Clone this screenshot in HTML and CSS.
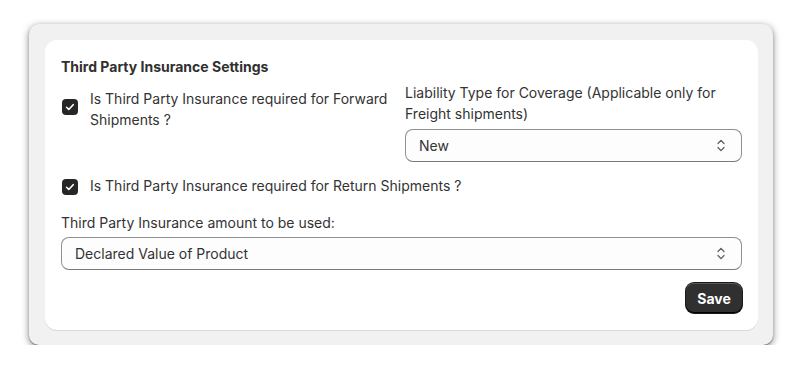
FILE: index.html
```html
<!DOCTYPE html>
<html lang="en">
<head>
<meta charset="utf-8">
<title>Third Party Insurance Settings</title>
<link rel="stylesheet" href="styles.css">
</head>
<body>
<div class="frame">
  <div class="card">
    <h2 class="title">Third Party Insurance Settings</h2>
    <div class="row">
      <label class="check check-top">
        <span class="box"><svg viewBox="0 0 16 16" width="16" height="16"><path d="M4.6 8.3l2.2 2.2 4.4-4.8" fill="none" stroke="#fff" stroke-width="1.6" stroke-linecap="round" stroke-linejoin="round"/></svg></span>
        <span class="check-text">Is Third Party Insurance required for Forward Shipments ?</span>
      </label>
      <div class="field">
        <div class="label">Liability Type for Coverage (Applicable only for Freight shipments)</div>
        <div class="select">
          <span>New</span>
          <svg class="chev" viewBox="0 0 10 15" width="10" height="15"><path d="M2 5.5l3-3.2 3 3.2M2 9.5l3 3.2 3-3.2" fill="none" stroke="#5c5c5c" stroke-width="1.2" stroke-linecap="round" stroke-linejoin="round"/></svg>
        </div>
      </div>
    </div>
    <label class="check check-return">
      <span class="box"><svg viewBox="0 0 16 16" width="16" height="16"><path d="M4.6 8.3l2.2 2.2 4.4-4.8" fill="none" stroke="#fff" stroke-width="1.6" stroke-linecap="round" stroke-linejoin="round"/></svg></span>
      <span class="check-text">Is Third Party Insurance required for Return Shipments ?</span>
    </label>
    <div class="field field-amount">
      <div class="label">Third Party Insurance amount to be used:</div>
      <div class="select">
        <span>Declared Value of Product</span>
        <svg class="chev" viewBox="0 0 10 15" width="10" height="15"><path d="M2 5.5l3-3.2 3 3.2M2 9.5l3 3.2 3-3.2" fill="none" stroke="#5c5c5c" stroke-width="1.2" stroke-linecap="round" stroke-linejoin="round"/></svg>
      </div>
    </div>
    <div class="actions">
      <button class="save">Save</button>
    </div>
  </div>
</div>
</body>
</html>
```
FILE: styles.css
```css
* { box-sizing: border-box; }
body {
  margin: 0;
  background: #fff;
  font-family: Inter, "Noto Sans", Arial, sans-serif;
  font-size: 14px;
  line-height: 21px;
  color: #333;
}
.frame {
  margin: 24px 0 0 29px;
  width: 744px;
  height: 321px;
  padding: 16px 15px 15px 16px;
  background: #f1f1f1;
  border-radius: 10px;
  box-shadow: 0 1px 1px rgba(0,0,0,0.3), 0 2px 7px rgba(0,0,0,0.5);
}
.card {
  height: 290px;
  background: #fff;
  border-radius: 12px;
  padding: 17px 16px 0 16px;
  box-shadow: 0 1px 0 #d8d8d8;
}
.title {
  margin: 0;
  font-size: 14px;
  font-weight: 650;
  line-height: 20px;
  color: #303030;
}
.row {
  display: grid;
  grid-template-columns: 1fr 1fr;
  column-gap: 7px;
  margin-top: 5px;
}
.check {
  display: flex;
  align-items: center;
  gap: 12px;
}
.check-top {
  align-self: start;
  padding-top: 6px;
}
.box {
  flex: none;
  width: 16px;
  height: 16px;
  margin: 0 0 0 1px;
  background: #262626;
  border-radius: 4px;
  display: flex;
}
.check-top .box { margin-bottom: 4px; }
.check-return .box { margin-top: 2px; }
.label { color: #333; }
.select {
  height: 33px;
  margin-top: 5px;
  display: flex;
  align-items: center;
  justify-content: space-between;
  padding: 0 15px 0 13px;
  background: #fdfdfd;
  border: 1px solid #909090;
  border-bottom-color: #7a7a7a;
  border-radius: 8px;
  color: #333;
}
.field-amount .select { margin-top: 4px; }
.chev { display: block; }
.check-return { margin-top: 13px; }
.field-amount { margin-top: 16px; }
.actions {
  display: flex;
  justify-content: flex-end;
  margin-top: 13px;
}
.save {
  width: 56px;
  height: 30px;
  border: 0;
  border-radius: 8px;
  background: #303030;
  color: #fff;
  font-family: inherit;
  font-size: 14px;
  font-weight: 650;
  box-shadow: inset 0 -1px 0 #000, inset 0 1px 0 rgba(255,255,255,0.2), 0 0 0 1px #1a1a1a;
}
```
